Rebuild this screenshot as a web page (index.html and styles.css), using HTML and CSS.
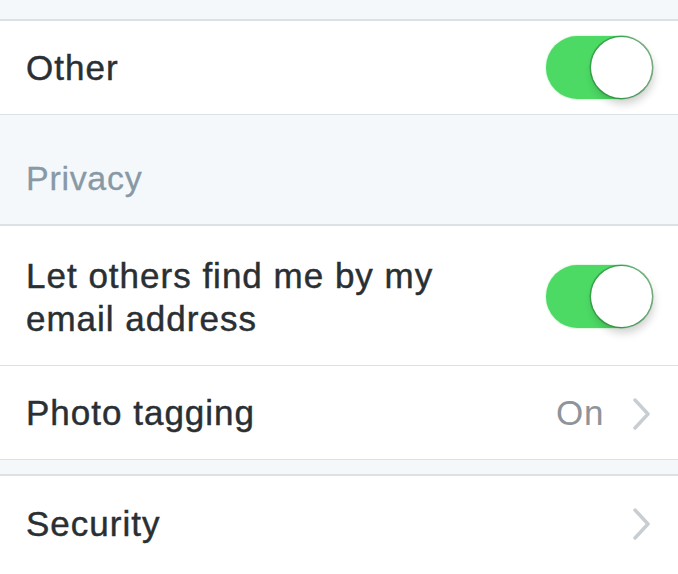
FILE: index.html
```html
<!DOCTYPE html>
<html lang="en">
<head>
    <meta charset="UTF-8">
    <meta name="viewport" content="width=device-width, initial-scale=1.0">
    <title>Settings</title>
    <link rel="stylesheet" href="styles.css">
</head>
<body>
    <div class="settings">
        <div class="spacer spacer-top"></div>

        <div class="row">
            <span class="row-label">Other</span>
            <span class="switch is-on"><span class="knob"></span></span>
        </div>

        <div class="section-header">Privacy</div>

        <div class="row row-tall">
            <span class="row-label wrap">Let others find me by my email address</span>
            <span class="switch is-on"><span class="knob"></span></span>
        </div>

        <div class="row row-joined">
            <span class="row-label">Photo tagging</span>
            <span class="row-detail">On</span>
            <svg class="chevron" width="20" height="32" viewBox="0 0 20 32">
                <path d="M3 2 L16 16 L3 30" fill="none" stroke="#c8cdd2" stroke-width="3.4" stroke-linecap="round" stroke-linejoin="round"/>
            </svg>
        </div>

        <div class="spacer spacer-small"></div>

        <div class="row row-last">
            <span class="row-label">Security</span>
            <svg class="chevron" width="20" height="32" viewBox="0 0 20 32">
                <path d="M3 2 L16 16 L3 30" fill="none" stroke="#c8cdd2" stroke-width="3.4" stroke-linecap="round" stroke-linejoin="round"/>
            </svg>
        </div>
    </div>
</body>
</html>
```

FILE: styles.css
```css
:root {
    --bg: #f5f8fa;
    --surface: #ffffff;
    --line: #dce1e5;
    --text: #292f33;
    --muted: #8899a6;
    --detail: #8e9499;
    --green: #4cd964;
}

* {
    box-sizing: border-box;
    margin: 0;
    padding: 0;
}

body {
    font-family: "Liberation Sans", Arial, sans-serif;
    background: var(--surface);
    color: var(--text);
    overflow: hidden;
}

.settings {
    display: flex;
    flex-direction: column;
}

/* grey bands between groups */
.spacer {
    background: var(--bg);
    border-bottom: 2px solid var(--line);
}

.spacer-top {
    height: 21px;
}

.spacer-small {
    height: 17px;
    border-top: 1px solid var(--line);
}

.section-header {
    height: 112px;
    padding: 0 26px 26px;
    display: flex;
    align-items: flex-end;
    font-size: 34px;
    letter-spacing: 0.7px;
    color: var(--muted);
    background: var(--bg);
    border-top: 1px solid var(--line);
    border-bottom: 2px solid var(--line);
    -webkit-text-stroke: 0.3px var(--muted);
}

/* Table rows */
.row {
    height: 93px;
    background: var(--surface);
    display: flex;
    align-items: center;
    padding: 0 26px;
    gap: 14px;
}

.row-tall {
    height: 139px;
    padding-top: 2px;
}

.row-joined {
    border-top: 1px solid var(--line);
    height: 94px;
}

.row-last {
    height: 100px;
    padding-bottom: 6px;
}

.row-label {
    font-size: 35px;
    letter-spacing: 1px;
    line-height: 43px;
    -webkit-text-stroke: 0.45px var(--text);
}

.row-label.wrap {
    max-width: 450px;
}

.row-detail {
    margin-left: auto;
    font-size: 35px;
    letter-spacing: 0.6px;
    color: var(--detail);
    margin-right: 14px;
}

.chevron {
    flex: none;
    margin-left: auto;
    margin-top: 2px;
}

.row-detail + .chevron {
    margin-left: 0;
}

/* iOS style switch */
.switch {
    position: relative;
    flex: none;
    margin-left: auto;
    width: 106px;
    height: 63px;
    border-radius: 32px;
    background: var(--green);
    box-shadow: 0 0 2px rgba(76, 217, 100, 0.6);
}

.knob {
    position: absolute;
    right: 0;
    top: 1px;
    width: 61px;
    height: 61px;
    border-radius: 50%;
    background: #ffffff;
    box-shadow: 0 0 0 1.5px rgba(40, 120, 55, 0.55), 2px 6px 8px rgba(0, 0, 0, 0.18);
}
```
